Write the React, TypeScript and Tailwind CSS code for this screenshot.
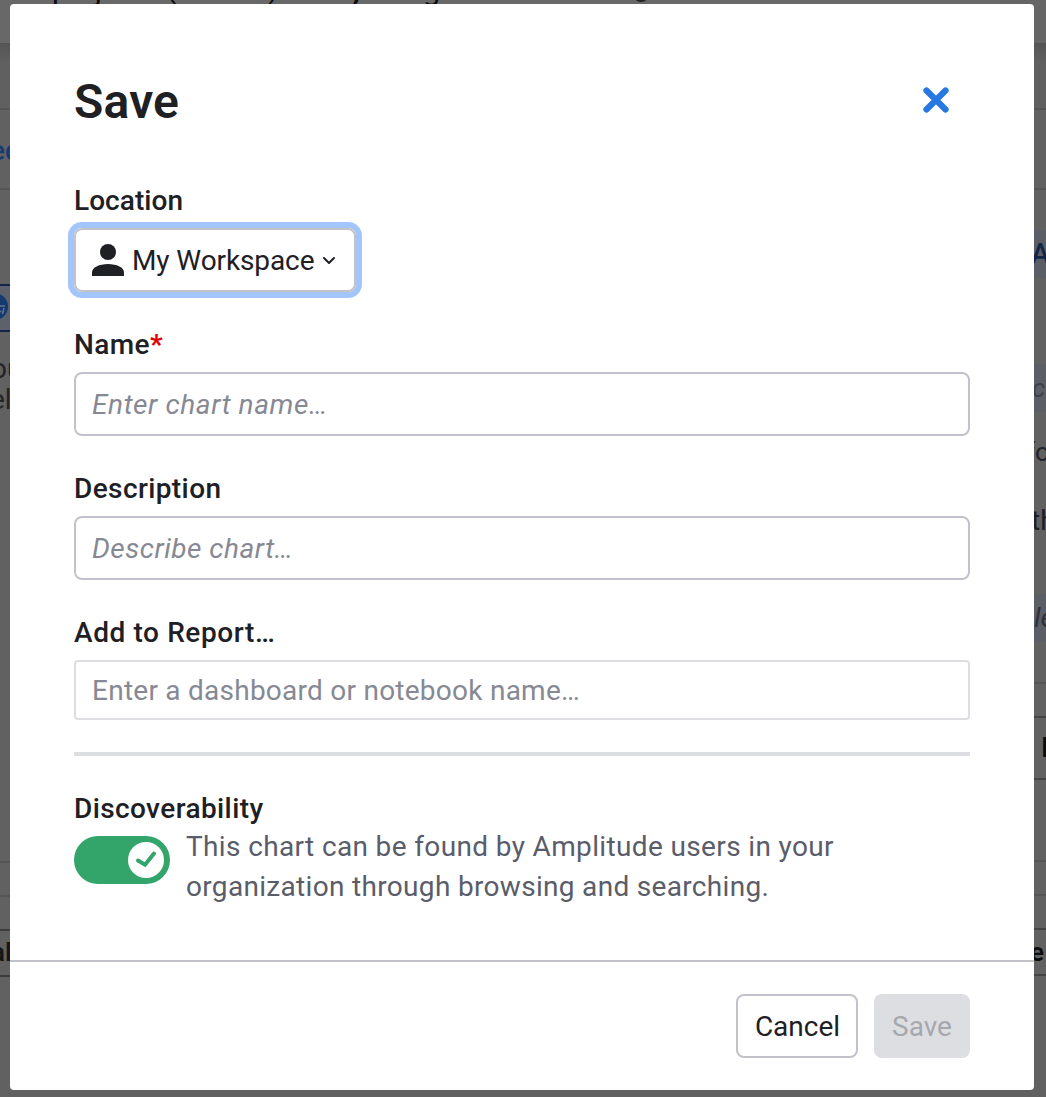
import React, { useState } from "react";

function PersonIcon() {
  return (
    <svg width="32" height="32" viewBox="0 0 32 32" fill="#1e2024" aria-hidden="true">
      <circle cx="16" cy="8" r="8" />
      <path d="M0 32v-3.500c0-5 7-8.500 16-8.500s16 3.500 16 8.500v3.500z" />
    </svg>
  );
}

function CloseIcon() {
  return (
    <svg width="26" height="26" viewBox="0 0 26 26" aria-hidden="true">
      <path d="M3.500 3.500l19 19M22.500 3.500l-19 19" stroke="#2878e1" strokeWidth="6.200" strokeLinecap="round" />
    </svg>
  );
}

function LeftBackdrop() {
  return (
    <div className="w-[30px] shrink-0 overflow-hidden whitespace-nowrap">
      <div className="h-[43px] bg-[#686868]" />
      <div className="h-[67px] border-b-2 border-[#555555] bg-linear-to-b from-[#555555] to-[#606060] to-30%" />
      <div className="flex h-20 items-center border-b-2 border-[#555555] pt-[3px] text-[28px] text-[#143a70]">
        <span className="-ml-[10px] font-medium">ed</span>
      </div>
      <div className="h-[94px]" />
      <div className="flex h-12 items-center border-y-2 border-[#12264a] bg-[#5d6169]">
        <svg className="-mt-[3px] -ml-[19px] shrink-0" width="27" height="27" viewBox="0 0 27 27" aria-hidden="true">
          <circle cx="13.500" cy="13.500" r="13.500" fill="#143a70" />
          <path d="M16 13h8M19 18.500h1.500M23 15l-1.500 6" fill="none" stroke="#65748c" strokeWidth="1.500" />
        </svg>
      </div>
      <div className="h-[529px] pt-[21px] text-[28px] leading-[31px] text-[#232428]">
        <div className="-ml-[9px]">ou</div>
        <div className="-ml-[10px]">el</div>
      </div>
      <div className="h-[34px] border-t-2 border-[#555555]" />
      <div className="h-[34px] border-t-2 border-[#555555]" />
      <div className="flex h-12 items-center border-y-2 border-[#3c3c40] text-[26px] font-semibold text-[#161618]">
        <span className="-mt-0.5 -ml-[9px]">al</span>
      </div>
    </div>
  );
}

function RightBackdrop() {
  return (
    <div className="w-[46px] shrink-0 overflow-hidden whitespace-nowrap">
      <div className="h-[43px] bg-[#666666]" />
      <div className="h-[67px] border-b-2 border-[#555555] bg-linear-to-b from-[#555555] to-[#606060] to-30%" />
      <div className="h-20 border-b-2 border-[#555555]" />
      <div className="mt-10 flex h-12 items-center bg-[#5b5e65] pl-[31px] text-[28px] font-medium text-[#12264a]">A</div>
      <div className="mt-[86px] flex h-12 items-center bg-[#5b5e65] pl-[32px] text-[26px] italic text-[#3e4046]">ct</div>
      <div className="mt-[22px] h-9 pl-[26px] text-[26px] leading-9 text-[#232428]">fo</div>
      <div className="mt-[33px] h-9 pl-[31px] text-[28px] leading-9 text-[#1e2024]">th</div>
      <div className="mt-[55px] flex h-12 items-center bg-[#5b5e65] pl-[34px] text-[28px] italic text-[#303238]">le</div>
      <div className="mt-10 h-[34px] border-t-2 border-[#555555]" />
      <div className="flex h-16 items-center border-y-2 border-[#444446] pl-[41px] text-[28px] font-semibold text-[#0c0c0e]">I</div>
      <div className="h-20" />
      <div className="h-[34px] border-t-2 border-[#555555]" />
      <div className="h-[34px] border-t-2 border-[#555555]" />
      <div className="flex h-12 items-center border-y-2 border-[#444446] pl-[30px] text-[26px] font-semibold text-[#0c0c0e]">e</div>
    </div>
  );
}

function Label({ children }: { children: React.ReactNode }) {
  return <div className="h-8 text-[28px] leading-[34px] font-medium tracking-[0.4px]">{children}</div>;
}

export default function App() {
  const [name, setName] = useState("");
  const [description, setDescription] = useState("");
  const [report, setReport] = useState("");

  return (
    <div className="relative h-[1097px] w-[1046px] overflow-hidden bg-[#616161] font-['Roboto',sans-serif] text-[#1e2024]">
      <div className="flex justify-between" aria-hidden="true">
        <LeftBackdrop />
        <div className="flex h-[30px] flex-1 items-start overflow-hidden bg-[#686868] text-[30px] leading-[30px] whitespace-nowrap text-[#0c0c0e]">
          <span className="-mt-[25px] ml-[22px]">p</span>
          <span className="-mt-[25px] ml-[26px]">j</span>
          <span className="-mt-[27px] ml-[64px]">(</span>
          <span className="-mt-[27px] ml-[92px]">)</span>
          <span className="-mt-[25px] ml-[74px] font-bold">,</span>
          <span className="-mt-[25px] ml-[63px]">g</span>
          <span className="-mt-[14px] ml-[193px] size-4 rounded-full bg-[#232428]" />
        </div>
        <RightBackdrop />
      </div>

      <div
        role="dialog"
        aria-label="Save"
        className="absolute top-1 left-[10px] flex h-[1086px] w-[1024px] flex-col rounded-[4px] bg-white"
      >
        <div className="flex-1 px-16 pt-[66px]">
          <div className="flex h-16 items-center justify-between pr-[21px]">
            <h1 className="text-[48px] leading-[64px] font-semibold tracking-[0.2px]">Save</h1>
            <button type="button" aria-label="Close" className="-mt-1">
              <CloseIcon />
            </button>
          </div>

          <div className="mt-[50px]">
            <div className="h-8 text-[28px] leading-[34px] font-medium tracking-[0.05px]">Location</div>
            <button
              type="button"
              className="mt-3 flex h-16 w-[282px] items-center rounded-lg border-2 border-[#c2c2ca] pl-4 text-[28px] ring-6 ring-[#a3c5fa]"
            >
              <PersonIcon />
              <span className="mt-0.5 ml-2 tracking-[-0.1px]">My Workspace</span>
              <svg className="ml-2" width="14" height="9" viewBox="0 0 14 9" fill="none" aria-hidden="true">
                <path d="M2 2l5 5 5-5" stroke="#1e2024" strokeWidth="2" strokeLinecap="round" strokeLinejoin="round" />
              </svg>
            </button>
          </div>

          <div className="mt-9">
            <Label>
              Name<span className="font-bold text-[#e00000]">*</span>
            </Label>
            <input
              value={name}
              onChange={(e) => setName(e.target.value)}
              placeholder="Enter chart name…"
              className="mt-3 block h-16 w-full rounded-lg border-2 border-[#c2c2ca] px-4 text-[28px] tracking-[0.6px] placeholder:text-[#868993] placeholder:italic"
            />
          </div>

          <div className="mt-9">
            <Label>Description</Label>
            <input
              value={description}
              onChange={(e) => setDescription(e.target.value)}
              placeholder="Describe chart…"
              className="mt-3 block h-16 w-full rounded-lg border-2 border-[#c2c2ca] px-4 text-[28px] tracking-[0.5px] placeholder:text-[#868993] placeholder:italic"
            />
          </div>

          <div className="mt-9">
            <div className="h-8 text-[28px] leading-[34px] font-medium tracking-[0.6px]">Add to Report…</div>
            <input
              value={report}
              onChange={(e) => setReport(e.target.value)}
              placeholder="Enter a dashboard or notebook name…"
              className="mt-3 block h-[60px] w-full rounded-[4px] border-2 border-[#dddee2] px-4 text-[28px] tracking-[0.25px] placeholder:text-[#868993]"
            />
          </div>

          <hr className="mt-8 h-1 border-0 bg-[#dddee2]" />

          <div className="mt-9">
            <Label>Discoverability</Label>
            <div className="mt-[3px] flex gap-4">
              <div className="mt-[9px] flex h-12 w-24 items-center justify-end rounded-full bg-[#34a56a] pr-1.5">
                <div className="flex size-9 items-center justify-center rounded-full bg-white">
                  <svg className="-mt-0.5" width="22" height="18" viewBox="0 0 22 18" fill="none" aria-hidden="true">
                    <path d="M3 10.500l7 4.200L19 3.500" stroke="#34a56a" strokeWidth="4" strokeLinecap="round" />
                  </svg>
                </div>
              </div>
              <p className="text-[28px] leading-10 tracking-[0.36px] text-[#5a5d69]">
                This chart can be found by Amplitude users in your
                <br />
                <span className="tracking-[0.32px]">organization through browsing and searching.</span>
              </p>
            </div>
          </div>
        </div>

        <div className="flex h-[130px] items-center justify-end gap-4 border-t-2 border-[#c2c2ca] px-16">
          <button
            type="button"
            className="h-16 w-[122px] rounded-lg border-2 border-[#c2c2ca] pt-0.5 pl-px text-[28px]"
          >
            Cancel
          </button>
          <button
            type="button"
            disabled
            className="h-16 w-24 rounded-lg bg-[#dddee2] pt-0.5 text-[28px] text-[#a6a8b0]"
          >
            Save
          </button>
        </div>
      </div>
    </div>
  );
}
